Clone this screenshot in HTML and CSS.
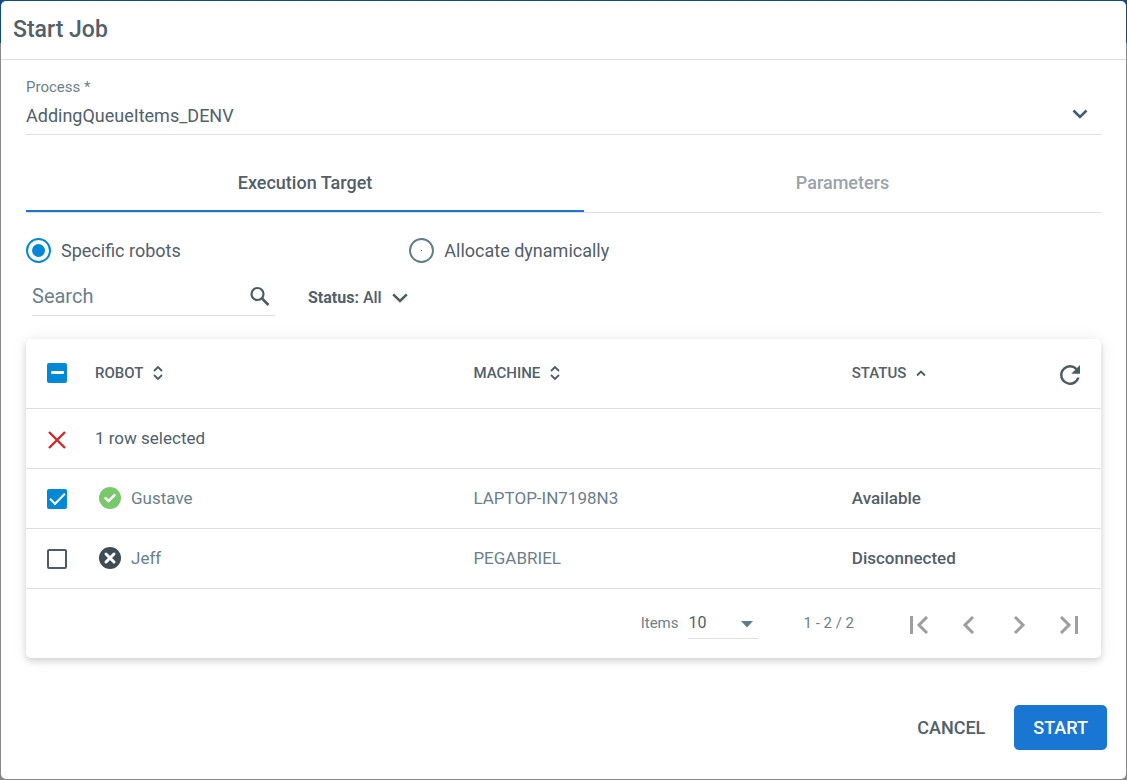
FILE: index.html
```html
<!DOCTYPE html>
<html lang="en">
<head>
<meta charset="utf-8">
<title>Start Job</title>
<link rel="stylesheet" href="styles.css">
</head>
<body>
<main class="dialog" role="dialog" aria-labelledby="dialog-title">
  <header class="dialog-header">
    <h1 class="dialog-title" id="dialog-title">Start Job</h1>
  </header>

  <div class="dialog-body">
    <div class="process">
      <label class="process-label" for="process">Process *</label>
      <div class="process-control">
        <select class="process-select" id="process"><option>AddingQueueItems_DENV</option></select>
        <svg class="process-icon" width="16" height="10" viewBox="0 0 16 10"><path d="M1.5 1.5 8 8l6.500-6.500" fill="none" stroke="#455a6b" stroke-width="2.500"/></svg>
      </div>
    </div>

    <div class="tabs" role="tablist">
      <button class="tab tab-active" role="tab" aria-selected="true">Execution Target</button>
      <button class="tab" role="tab" aria-selected="false">Parameters</button>
    </div>

    <div class="targets">
      <label class="target"><input class="radio" type="radio" name="target" checked>Specific robots</label>
      <label class="target"><input class="radio" type="radio" name="target">Allocate dynamically</label>
    </div>

    <div class="filters">
      <div class="search">
        <input class="search-input" type="text" placeholder="Search" aria-label="Search">
        <svg width="20" height="20" viewBox="0 0 20 20"><g fill="none" stroke="#4b5c65"><circle cx="7.500" cy="8" r="6" stroke-width="2.200"/><path d="M12 12.500l6.500 6.500" stroke-width="2.600"/></g></svg>
      </div>
      <button class="status-filter"><span><b class="status-key">Status:</b> All</span>
        <svg width="16" height="12" viewBox="0 0 16 12"><path d="M1.200 3.300 8 10l6.800-6.700" fill="none" stroke="#4b5c65" stroke-width="2.500"/></svg>
      </button>
    </div>

    <section class="card">
      <table class="grid">
        <thead>
          <tr>
            <th class="col-check"><input class="check check-mixed" type="checkbox" aria-label="Select all"></th>
            <th class="col-wide"><button class="sort">ROBOT
              <svg width="10" height="14" viewBox="0 0 10 14"><path d="M1 5l4-4 4 4M1 9l4 4 4-4" fill="none" stroke="#4b5c65" stroke-width="1.800"/></svg></button></th>
            <th class="col-wide"><button class="sort">MACHINE
              <svg width="10" height="14" viewBox="0 0 10 14"><path d="M1 5l4-4 4 4M1 9l4 4 4-4" fill="none" stroke="#4b5c65" stroke-width="1.800"/></svg></button></th>
            <th><div class="status-head"><button class="sort">STATUS
              <svg width="10" height="14" viewBox="0 0 10 14"><path d="M1 9.500l4-4 4 4" fill="none" stroke="#4b5c65" stroke-width="1.800"/></svg></button>
              <button class="icon-button refresh" aria-label="Refresh"><svg width="30" height="30" viewBox="0 0 24 24"><path d="M17.650 6.350A7.960 7.960 0 0 0 12 4a8 8 0 1 0 7.730 10h-2.080A6 6 0 1 1 12 6c1.660 0 3.140.69 4.220 1.780L13 11h7V4z" fill="#4b5c65"/></svg></button></div></th>
          </tr>
        </thead>
        <tbody>
          <tr>
            <td class="col-check"><button class="clear" aria-label="Clear selection"><svg width="20" height="20" viewBox="0 0 20 20"><path d="M2 2l16 16M18 2L2 18" fill="none" stroke="#cc2929" stroke-width="2.400"/></svg></button></td>
            <td class="dark" colspan="3">1 row selected</td>
          </tr>
          <tr>
            <td class="col-check"><input class="check" type="checkbox" aria-label="Select Gustave" checked></td>
            <td><span class="robot"><svg width="22" height="22" viewBox="0 0 22 22"><circle cx="11" cy="11" r="11" fill="#7bc86c"/><path d="M6.500 11.200l3 3 6-6" fill="none" stroke="#fff" stroke-width="2.500" stroke-linecap="round" stroke-linejoin="round"/></svg>Gustave</span></td>
            <td>LAPTOP-IN7198N3</td>
            <td class="state">Available</td>
          </tr>
          <tr>
            <td class="col-check"><input class="check" type="checkbox" aria-label="Select Jeff"></td>
            <td><span class="robot"><svg width="22" height="22" viewBox="0 0 22 22"><circle cx="11" cy="11" r="11" fill="#3e4c55"/><path d="M7 7l8 8M15 7l-8 8" fill="none" stroke="#fff" stroke-width="3" stroke-linecap="round"/></svg>Jeff</span></td>
            <td>PEGABRIEL</td>
            <td class="state">Disconnected</td>
          </tr>
        </tbody>
      </table>

      <nav class="pager" aria-label="Pages">
        <label class="size-label" for="page-size">Items</label>
        <div class="size-control">
          <select class="size-select" id="page-size"><option>10</option></select>
          <svg class="size-icon" width="12" height="7" viewBox="0 0 12 7"><path d="M0 0h12L6 6.500z" fill="#607d8b"/></svg>
        </div>
        <span class="range">1 - 2 / 2</span>
        <div class="pages">
          <button class="icon-button" aria-label="First page"><svg width="20" height="18" viewBox="0 0 20 18"><path d="M2.500 0v18M18 1l-8 8 8 8" fill="none" stroke="#9e9e9e" stroke-width="3"/></svg></button>
          <button class="icon-button" aria-label="Previous page"><svg width="20" height="18" viewBox="0 0 20 18"><path d="M14 1L6 9l8 8" fill="none" stroke="#9e9e9e" stroke-width="3"/></svg></button>
          <button class="icon-button" aria-label="Next page"><svg width="20" height="18" viewBox="0 0 20 18"><path d="M6 1l8 8-8 8" fill="none" stroke="#9e9e9e" stroke-width="3"/></svg></button>
          <button class="icon-button" aria-label="Last page"><svg width="20" height="18" viewBox="0 0 20 18"><path d="M17.500 0v18M2 1l8 8-8 8" fill="none" stroke="#9e9e9e" stroke-width="3"/></svg></button>
        </div>
      </nav>
    </section>
  </div>

  <footer class="actions">
    <button class="action">CANCEL</button>
    <button class="action action-primary">START</button>
  </footer>
</main>
</body>
</html>
```
FILE: styles.css
```css
* { box-sizing: border-box; }

body {
  margin: 0;
  min-height: 100vh;
  padding: 1px;
  display: flex;
  background: linear-gradient(#124a87 43px, #878787 43px);
  font-family: Roboto, "Liberation Sans", sans-serif;
  color: #526069;
}

svg { display: block; flex: none; }

button, select, input { font: inherit; color: inherit; margin: 0; }
button { border: 0; padding: 0; background: none; cursor: pointer; }

.dialog {
  flex: 1;
  min-width: 0;
  display: flex;
  flex-direction: column;
  background: #fff;
  border-radius: 5px;
}

.dialog-header {
  padding: 14px 12px 15px;
  border-bottom: 1px solid #dedede;
}
.dialog-title { margin: 0; font-size: 23px; line-height: 29px; font-weight: 500; }

.dialog-body { flex: 1; padding: 17px 25px 0; }

.process { border-bottom: 1px solid #dedede; }
.process-label { display: block; font-size: 15px; line-height: 20px; color: #6b7f8a; }
.process-control { position: relative; display: flex; }
.process-select {
  appearance: none;
  width: 100%;
  height: 37px;
  padding: 0;
  border: 0;
  background: none;
  font-size: 18px;
}
.process-icon { position: absolute; right: 13px; top: 12px; pointer-events: none; }

.tabs { display: flex; margin-top: 19px; border-bottom: 1px solid #dedede; }
.tab {
  flex: 1 1 auto;
  height: 58px;
  border-bottom: 2px solid transparent;
  font-size: 18px;
  font-weight: 500;
  color: #9aa3a9;
}
.tab-active { color: #526069; border-bottom-color: #1976d2; }

.targets { display: flex; gap: 25px; padding-top: 25px; }
.target {
  flex: 0 0 33.333%;
  display: flex;
  align-items: center;
  gap: 10px;
  font-size: 18px;
  line-height: 25px;
}
.radio {
  appearance: none;
  display: grid;
  place-items: center;
  width: 25px;
  height: 25px;
  border: 2px solid #607d8b;
  border-radius: 50%;
}
.radio::before { content: ""; width: 1px; height: 1px; background: #4b5c65; }
.radio:checked { border-color: #0288d6; }
.radio:checked::before { width: 13px; height: 13px; border-radius: 50%; background: #0288d6; }

.filters { display: flex; align-items: center; gap: 33px; padding: 13px 6px 0; }
.search {
  display: flex;
  align-items: center;
  width: 243px;
  height: 40px;
  padding-right: 5px;
  border-bottom: 1px solid #dedede;
}
.search-input {
  flex: 1;
  min-width: 0;
  padding: 0;
  border: 0;
  outline: 0;
  background: none;
  font-size: 20px;
}
.search-input::placeholder { color: #6b7f8a; opacity: 1; }
.status-filter { display: flex; align-items: center; gap: 10px; font-size: 16px; font-weight: 500; padding-top: 2px; }
.status-key { font-weight: 700; }

.card {
  margin-top: 23px;
  border-radius: 5px;
  background: #fff;
  box-shadow: 0 3px 6px rgba(0, 0, 0, .14), 0 1px 16px rgba(0, 0, 0, .08);
}
.grid { width: 100%; table-layout: fixed; border-collapse: separate; border-spacing: 0; }
.grid th, .grid td {
  height: 60px;
  padding: 0 0 2px;
  border-bottom: 1px solid #dedede;
  text-align: left;
  vertical-align: middle;
  font-size: 17px;
  color: #6b7f8a;
}
.grid th { height: 70px; font-size: 15px; font-weight: 500; color: #526069; }
.grid .col-check { width: 69px; padding-left: 21px; }
.grid td.col-check { padding-bottom: 0; }
.grid .col-wide { width: 35.2%; }
.grid .dark { color: #526069; }
.grid .state { font-weight: 500; color: #526069; }

.check {
  appearance: none;
  display: block;
  width: 20px;
  height: 20px;
  border: 2px solid #4b5c65;
  border-radius: 2px;
}
.check-mixed, .check:checked { border-color: #0288d6; background: #0288d6; display: grid; place-items: center; }
.check-mixed::before { content: ""; width: 13px; height: 3px; border-radius: 1px; background: #fff; }
.check:checked::before {
  content: "";
  width: 13px;
  height: 6px;
  margin-bottom: 4px;
  border: solid #fff;
  border-width: 0 0 2px 2px;
  transform: rotate(-45deg);
}

.sort { display: inline-flex; align-items: center; gap: 10px; }
.status-head { display: flex; align-items: center; justify-content: space-between; padding-right: 6px; }
.icon-button { width: 50px; height: 40px; display: grid; place-items: center; }
.refresh { padding-top: 4px; }
.clear { display: block; padding-top: 2px; }
.robot { display: flex; align-items: center; gap: 10px; padding-left: 4px; }

.pager {
  display: flex;
  align-items: center;
  justify-content: flex-end;
  height: 69px;
  padding-right: 7px;
  font-size: 15px;
  color: #6b7f8a;
}
.size-label, .range { padding-bottom: 2px; }
.size-control {
  position: relative;
  width: 70px;
  margin-left: 10px;
  border-bottom: 1px solid #dedede;
}
.size-select {
  appearance: none;
  display: block;
  width: 100%;
  height: 30px;
  padding: 0 0 2px;
  border: 0;
  background: none;
  font-size: 16px;
  color: #526069;
}
.size-icon { position: absolute; right: 5px; top: 13px; pointer-events: none; }
.range { margin-left: 45px; }
.pages { display: flex; margin-left: 40px; padding-top: 3px; }

.actions {
  display: flex;
  justify-content: flex-end;
  gap: 10px;
  padding: 29px 19px;
}
.action { height: 45px; padding: 0 19px; border-radius: 5px; font-size: 18px; font-weight: 500; }
.action-primary { background: #1976d2; color: #fff; }
```
